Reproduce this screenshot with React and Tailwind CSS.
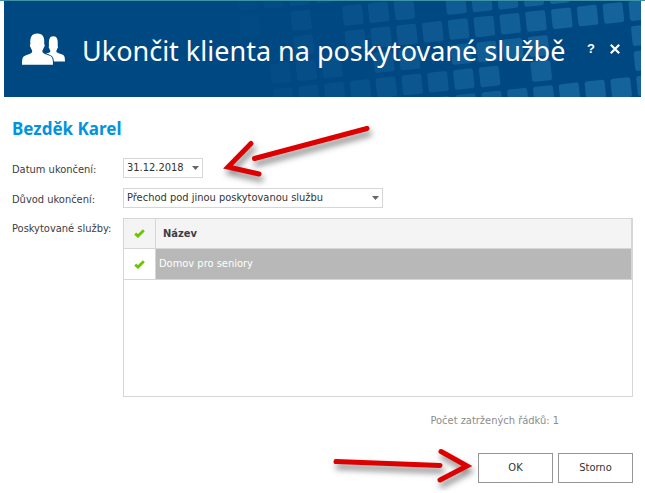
import { useState } from 'react'

// [row, first column, last column] of the tile pattern in the header
const TILE_RUNS = [
  [-2, -11, -7],
  [-1, -11, -11],
  [-1, -9, -9],
  [-1, -7, -5],
  [-1, -3, 1],
  [0, -9, -9],
  [0, -7, 4],
  [1, -10, -8],
  [1, -6, -5],
  [1, -3, 0],
  [1, 4, 4],
  [2, -10, -2],
  [2, 0, 0],
  [2, 4, 4],
  [3, -9, 4],
]

const tiles = TILE_RUNS.flatMap(([row, from, to]) =>
  Array.from({ length: to - from + 1 }, (_, i) => {
    const col = from + i
    return {
      key: `${row}:${col}`,
      x: 532 + col * 25.8 + row * 2.6,
      y: 20 - col * 2.7 + row * 25,
      opacity: Math.max(0.06, Math.min(1, (col + 12) / 13)),
    }
  })
)

const services = [{ id: 1, name: 'Domov pro seniory', checked: true }]

function HeaderTiles() {
  return (
    <svg className="absolute top-0 right-0 h-full w-[637px]" viewBox="0 0 637 96" aria-hidden="true">
      {tiles.map((t) => (
        <rect
          key={t.key}
          x="-10"
          y="-10"
          width="20"
          height="20"
          rx="2.5"
          fill="#15639b"
          opacity={t.opacity}
          transform={`translate(${t.x} ${t.y}) rotate(-6)`}
        />
      ))}
    </svg>
  )
}

function PeopleIcon() {
  return (
    <svg className="h-8 w-[43px] shrink-0" viewBox="0 0 43 32" fill="#fff" aria-hidden="true">
      <path d="M22 28.500v-7c2.500-1.200 6.300-1.500 6.400-3.200 0-.9-.7-1.400-1-2.800-.7-.2-1-2.100-.4-2.500C26.600 6.400 27.500 3.200 31.300 3.200s4.900 3.200 4.400 9.800c.6.4.3 2.300-.4 2.500-.3 1.400-1 1.900-1 2.800 0 1.400 2 1.900 4.700 2.800 3 1 4 1.800 4 7.400z" />
      <path
        d="M0 31.800c0-6.200.5-8 3.500-9.200 3.500-1.300 6.500-1.900 6.700-4 .1-1.500-1-2.200-1.400-4.100-.9-.3-1.300-3.200-.4-3.600C7.900 4.300 9.600.5 15.300.5s7.400 3.800 6.900 10.400c.9.4.5 3.300-.4 3.600-.4 1.900-1.500 2.600-1.400 4.100.2 2.100 3.200 2.700 6.700 4 3.400 1.200 3.900 3 3.900 9.200z"
        stroke="#004882"
        strokeWidth="2"
        paintOrder="stroke"
      />
    </svg>
  )
}

function Caret() {
  return (
    <svg className="pointer-events-none absolute top-2 right-1 h-1 w-[7px]" viewBox="0 0 7 4" aria-hidden="true">
      <path d="M0 0h7L3.500 4z" fill="#666" />
    </svg>
  )
}

function CheckMark() {
  return (
    <svg className="pointer-events-none absolute inset-0 m-auto h-[9px] w-[11px]" viewBox="0 0 11 9" aria-hidden="true">
      <path d="M1.200 4.600 4 7.100 9.800 1.300" fill="none" stroke="#6cc500" strokeWidth="2.800" />
    </svg>
  )
}

function Tick({ checked, onChange, label }) {
  return (
    <label className="relative mx-auto block size-4">
      <input type="checkbox" checked={checked} onChange={onChange} aria-label={label} className="block size-4 appearance-none" />
      {checked && <CheckMark />}
    </label>
  )
}

function Arrow({ className, viewBox, shaft, head }) {
  return (
    <svg
      className={`pointer-events-none absolute overflow-visible drop-shadow-[2px_5px_3px_rgba(0,0,0,0.5)] ${className}`}
      viewBox={viewBox}
      fill="none"
      stroke="#dc0000"
      strokeWidth="5"
      strokeLinecap="round"
      aria-hidden="true"
    >
      <path d={shaft} />
      <path d={head} strokeLinejoin="miter" />
    </svg>
  )
}

export default function App() {
  const [date, setDate] = useState('31.12.2018')
  const [reason, setReason] = useState('Přechod pod jinou poskytovanou službu')
  const [rows, setRows] = useState(services)

  const checkedCount = rows.filter((r) => r.checked).length
  const allChecked = checkedCount === rows.length

  const toggleRow = (id) => setRows(rows.map((r) => (r.id === id ? { ...r, checked: !r.checked } : r)))
  const toggleAll = () => setRows(rows.map((r) => ({ ...r, checked: !allChecked })))

  const selectClass = 'h-5 w-full appearance-none border border-[#d6d6d6] bg-white pl-[3px] text-[#333333] outline-none'

  return (
    <div className="border-t border-[#3d93a8] bg-white pb-2 font-['DejaVu_Sans_Condensed','DejaVu_Sans',sans-serif] text-[11px] leading-4 text-[#3c3c46]">
      <header className="relative mr-1 ml-1 flex h-24 items-center overflow-hidden bg-[#004882] pr-5 pl-[18px] text-white">
        <HeaderTiles />
        <div className="relative flex flex-1 items-center gap-[17px]">
          <PeopleIcon />
          <h1 className="pt-1 font-['Noto_Sans',sans-serif] text-[27px] leading-10 whitespace-nowrap">Ukončit klienta na poskytované službě</h1>
        </div>
        <div className="relative flex items-center gap-3">
          <button type="button" aria-label="Nápověda" className="w-3 font-['Liberation_Sans',sans-serif] text-[13px] font-bold">?</button>
          <button type="button" aria-label="Zavřít" className="flex w-3 justify-center">
            <svg className="size-[10px]" viewBox="0 0 10 10" stroke="#fff" strokeWidth="2.200" aria-hidden="true">
              <path d="M.8.8l8.400 8.400M9.200.8.8 9.200" />
            </svg>
          </button>
        </div>
      </header>

      <form className="pr-3 pl-3" onSubmit={(e) => e.preventDefault()}>
        <h2 className="mt-5 font-['Noto_Sans',sans-serif] text-[17px] leading-6 font-bold text-[#0094e0]">Bezděk Karel</h2>

        <div className="mt-[17px] grid grid-cols-[111px_1fr] gap-y-[10px]">
          <label htmlFor="date" className="pt-1">Datum ukončení:</label>
          <div className="relative w-20">
            <select id="date" value={date} onChange={(e) => setDate(e.target.value)} className={selectClass}>
              <option>31.12.2018</option>
            </select>
            <Caret />
            <Arrow
              className="-top-8 left-[104px] h-[48px] w-[142px]"
              viewBox="227 126 142 48"
              shaft="M254.500 158.500 367 128.500"
              head="M251 143.500 228 167 259 174"
            />
          </div>

          <label htmlFor="reason" className="pt-1">Důvod ukončení:</label>
          <div className="relative w-[260px]">
            <select id="reason" value={reason} onChange={(e) => setReason(e.target.value)} className={selectClass}>
              <option>Přechod pod jinou poskytovanou službu</option>
            </select>
            <Caret />
          </div>

          <span id="services-label" className="pt-[3px] whitespace-nowrap">Poskytované služby:</span>
          <div className="h-[179px] border border-[#d6d6d6]">
            <table className="w-full table-fixed border-separate border-spacing-0 text-left" aria-labelledby="services-label">
              <thead>
                <tr className="h-[30px] bg-[#f4f4f4]">
                  <th className="w-8 border-r border-b border-[#d6d6d6] p-0">
                    <Tick checked={allChecked} onChange={toggleAll} label="Vybrat vše" />
                  </th>
                  <th className="border-r border-b border-[#d6d6d6] py-0 pr-0 pl-[7px] font-bold">Název</th>
                </tr>
              </thead>
              <tbody>
                {rows.map((r) => (
                  <tr key={r.id} className="h-[31px]">
                    <td className="border-r border-b border-[#d6d6d6] p-0">
                      <Tick checked={r.checked} onChange={() => toggleRow(r.id)} label={r.name} />
                    </td>
                    <td className="border-r border-b border-[#d6d6d6] bg-[#b8b8b8] py-0 pr-0 pl-[3px] text-white">{r.name}</td>
                  </tr>
                ))}
              </tbody>
            </table>
          </div>
        </div>

        <p className="mt-4 pr-[74px] text-right text-[#8c8c8c]">Počet zatržených řádků: {checkedCount}</p>

        <div className="relative mt-6 flex justify-end gap-[5px]">
          <Arrow
            className="-top-1 right-[162px] h-9 w-[138px]"
            viewBox="333 449 138 36"
            shaft="M336 461.500 440 465.500"
            head="M441 451.500 467 466 440 480"
          />
          <button type="submit" className="h-[30px] w-[75px] border border-[#969696] bg-white text-[#333333]">OK</button>
          <button type="button" className="h-[30px] w-[75px] border border-[#969696] bg-white text-[#333333]">Storno</button>
        </div>
      </form>
    </div>
  )
}
